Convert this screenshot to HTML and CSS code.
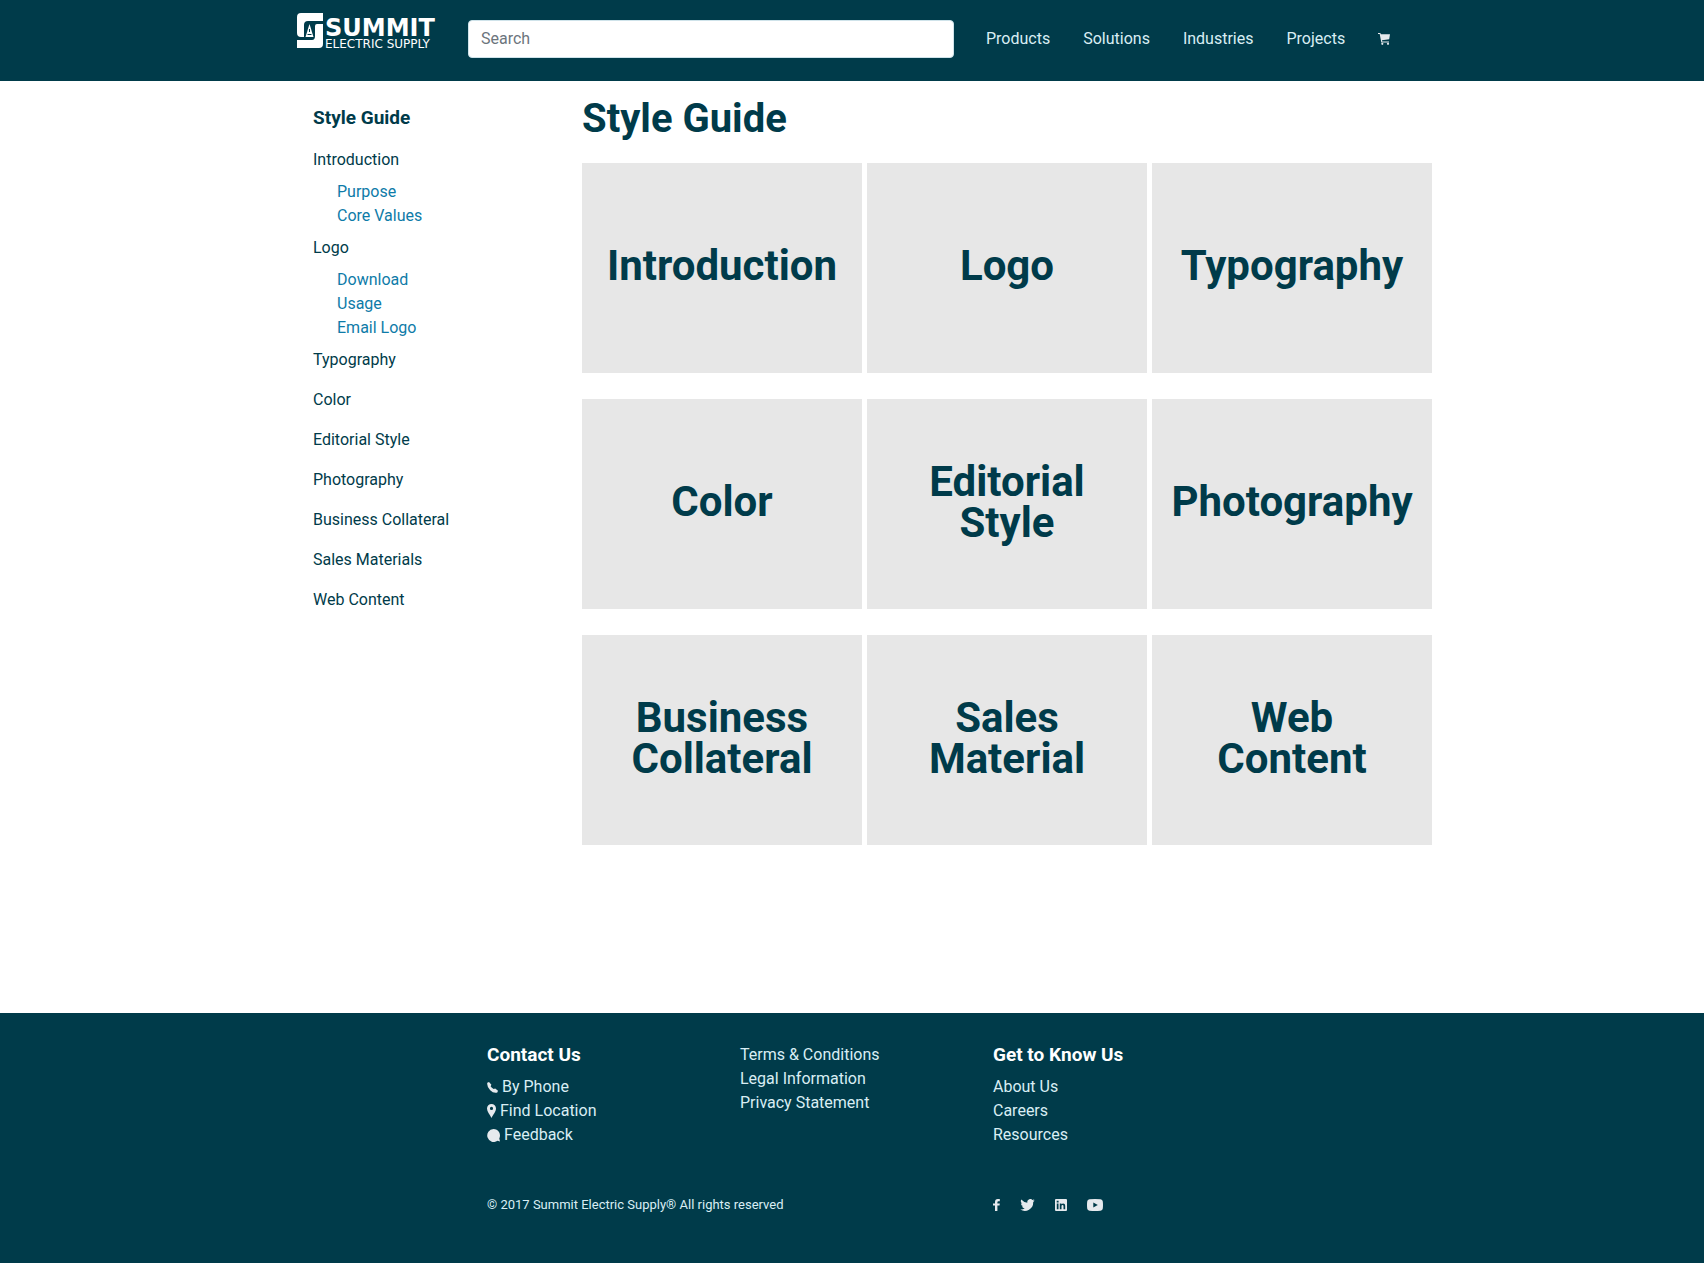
FILE: index.html
```html
<!DOCTYPE html>
<html lang="en">
<head>
<meta charset="utf-8">
<meta name="viewport" content="width=device-width, initial-scale=1">
<title>Style Guide | Summit Electric Supply</title>
<link rel="stylesheet" href="styles.css">
</head>
<body>
<header class="site-header">
  <div class="header-inner">
    <a class="logo" href="#" aria-label="Summit Electric Supply">
      <svg class="logo-mark" viewBox="0 0 26 35" width="26" height="35" aria-hidden="true">
        <path fill="#fff" d="M4 0H26V8H11Q7 8 7 12V24H4Q0 24 0 20V4Q0 0 4 0Z"/>
        <path fill="#fff" d="M20 11H26V31Q26 35 22 35H0V27H15Q18 27 18 23V13Q18 11 20 11Z"/>
        <path fill="#fff" d="M12.500 11L16.500 24H8.500Z"/>
        <path fill="none" stroke="#003b4a" stroke-width="1" d="M12.500 16V19M10.500 21.500H14.500"/>
      </svg>
      <span class="logo-text">
        <span class="logo-name">SUMMIT</span>
        <span class="logo-sub">ELECTRIC SUPPLY</span>
      </span>
    </a>
    <form class="search" role="search">
      <input class="search-input" type="search" placeholder="Search" aria-label="Search">
    </form>
    <nav class="main-nav" aria-label="Main">
      <a href="#">Products</a>
      <a href="#">Solutions</a>
      <a href="#">Industries</a>
      <a href="#">Projects</a>
      <a class="cart" href="#" aria-label="Cart">
        <svg viewBox="0 0 12 12" width="12" height="12" aria-hidden="true"><path fill="currentColor" d="M0 0H2.400L2.800 1.200H12L11.200 6.200L4 7.200L4.200 8.400H11V9.400H3.300L1.700 1H0Z"/><circle fill="currentColor" cx="4.300" cy="10.800" r="1.100"/><circle fill="currentColor" cx="10" cy="10.800" r="1.100"/></svg>
      </a>
    </nav>
  </div>
</header>

<div class="page">
  <aside class="sidebar">
    <h2 class="sidebar-title">Style Guide</h2>
    <ul class="menu">
      <li><a class="menu-link" href="#">Introduction</a>
        <ul class="submenu">
          <li><a href="#">Purpose</a></li>
          <li><a href="#">Core Values</a></li>
        </ul>
      </li>
      <li><a class="menu-link" href="#">Logo</a>
        <ul class="submenu">
          <li><a href="#">Download</a></li>
          <li><a href="#">Usage</a></li>
          <li><a href="#">Email Logo</a></li>
        </ul>
      </li>
      <li><a class="menu-link" href="#">Typography</a></li>
      <li><a class="menu-link" href="#">Color</a></li>
      <li><a class="menu-link" href="#">Editorial Style</a></li>
      <li><a class="menu-link" href="#">Photography</a></li>
      <li><a class="menu-link" href="#">Business Collateral</a></li>
      <li><a class="menu-link" href="#">Sales Materials</a></li>
      <li><a class="menu-link" href="#">Web Content</a></li>
    </ul>
  </aside>
  <main class="content">
    <h1 class="title">Style Guide</h1>
    <div class="tiles">
      <a class="tile" href="#">Introduction</a>
      <a class="tile" href="#">Logo</a>
      <a class="tile" href="#">Typography</a>
      <a class="tile" href="#">Color</a>
      <a class="tile" href="#">Editorial<br>Style</a>
      <a class="tile" href="#">Photography</a>
      <a class="tile" href="#">Business<br>Collateral</a>
      <a class="tile" href="#">Sales<br>Material</a>
      <a class="tile" href="#">Web<br>Content</a>
    </div>
  </main>
</div>

<footer class="site-footer">
  <div class="footer-inner">
    <section>
      <h2 class="footer-title">Contact Us</h2>
      <ul class="footer-list">
        <li><a href="#"><svg viewBox="0 0 11 11" width="11" height="11" aria-hidden="true"><path fill="currentColor" d="M0.300 0.800L2 0L4.400 2.800L3.600 4.200Q4.600 6 6.700 7L8.200 6.400L11 8.700L10.300 10.500Q6.600 11.600 3.200 8.200Q-0.400 4.600 0.300 0.800Z"/></svg>By Phone</a></li>
        <li><a href="#"><svg viewBox="0 0 9 14" width="9" height="14" aria-hidden="true"><path fill="currentColor" fill-rule="evenodd" d="M4.500 0A4.500 4.500 0 0 1 9 4.500C9 7.500 6.500 10 4.500 14C2.500 10 0 7.500 0 4.500A4.500 4.500 0 0 1 4.500 0ZM4.500 2.800A1.600 1.600 0 1 0 4.500 6A1.600 1.600 0 1 0 4.500 2.800Z"/></svg>Find Location</a></li>
        <li><a href="#"><svg viewBox="0 0 13 13" width="13" height="13" aria-hidden="true"><path fill="currentColor" d="M6.500 0A6.500 6.500 0 0 1 12.300 9.400L13 12.500L10.500 11.800A6.500 6.500 0 1 1 6.500 0Z"/></svg>Feedback</a></li>
      </ul>
    </section>
    <ul class="footer-list">
      <li><a href="#">Terms &amp; Conditions</a></li>
      <li><a href="#">Legal Information</a></li>
      <li><a href="#">Privacy Statement</a></li>
    </ul>
    <section>
      <h2 class="footer-title">Get to Know Us</h2>
      <ul class="footer-list">
        <li><a href="#">About Us</a></li>
        <li><a href="#">Careers</a></li>
        <li><a href="#">Resources</a></li>
      </ul>
    </section>
    <p class="copyright">© 2017 Summit Electric Supply® All rights reserved</p>
    <div class="social">
      <a href="#" aria-label="Facebook"><svg viewBox="0 0 7 12" width="7" height="12" aria-hidden="true"><path fill="currentColor" d="M2 12V6.600H0V4.500H2V3Q2 0 4.800 0H6.800V2.200H5.400Q4.400 2.200 4.400 3.200V4.500H6.800L6.500 6.600H4.400V12Z"/></svg></a>
      <a href="#" aria-label="Twitter"><svg viewBox="0 0 24 20" width="15" height="12" aria-hidden="true"><path fill="currentColor" d="M24 2.400a10 10 0 0 1-2.800.8A5 5 0 0 0 23.300.500a10 10 0 0 1-3.100 1.200A4.900 4.900 0 0 0 11.800 6.200 14 14 0 0 1 1.700 1a4.900 4.900 0 0 0 1.500 6.600A5 5 0 0 1 1 7v.1A4.900 4.900 0 0 0 4.900 12a5 5 0 0 1-2.200.1 4.900 4.900 0 0 0 4.600 3.400A10 10 0 0 1 0 17.500 14 14 0 0 0 21.500 5 10 10 0 0 0 24 2.400Z"/></svg></a>
      <a href="#" aria-label="LinkedIn"><svg viewBox="0 0 12 12" width="12" height="12" aria-hidden="true"><path fill="currentColor" fill-rule="evenodd" d="M1 0H11Q12 0 12 1V11Q12 12 11 12H1Q0 12 0 11V1Q0 0 1 0ZM1.800 4.600V10.200H3.500V4.600ZM1.700 1.800V3.600H3.600V1.800ZM4.800 4.600V10.200H6.500V7Q6.500 6 7.500 6T8.500 7V10.200H10.200V6.800Q10.200 4.500 8.200 4.500Q7 4.500 6.500 5.300V4.600Z"/></svg></a>
      <a href="#" aria-label="YouTube"><svg viewBox="0 0 16 12" width="16" height="12" aria-hidden="true"><path fill="currentColor" fill-rule="evenodd" d="M2.500 0.300Q8-.3 13.500.3Q15.600.5 15.800 2.500Q16.200 6 15.800 9.500Q15.600 11.500 13.500 11.700Q8 12.300 2.500 11.700Q.4 11.500.2 9.500Q-.2 6 .2 2.500Q.4.500 2.500.3ZM6.300 3.400V8.600L10.800 6Z"/></svg></a>
    </div>
  </div>
</footer>
</body>
</html>
```
FILE: styles.css
```css
*, *::before, *::after { box-sizing: border-box; }

body {
  margin: 0;
  background: #fff;
  color: #003b4a;
  font-family: Roboto, "Noto Sans", sans-serif;
  font-size: 16px;
  line-height: 24px;
}

a { color: inherit; text-decoration: none; }
a:hover { text-decoration: underline; }
ul { list-style: none; margin: 0; padding: 0; }
h1, h2, p { margin: 0; }
svg { display: block; flex: none; }

/* Header */
.site-header { background: #003b4a; color: #d9eef4; }

.header-inner {
  display: flex;
  align-items: flex-start;
  max-width: 1170px;
  margin: 0 auto;
  padding: 13px 45px 23px 30px;
}

.logo { display: flex; gap: 2px; width: 171px; flex: none; color: #fff; }
.logo:hover { text-decoration: none; }

.logo-text {
  display: flex;
  flex-direction: column;
  padding-top: 5px;
  font-family: "DejaVu Sans", sans-serif;
  white-space: nowrap;
}

.logo-name { font-size: 24px; font-weight: 700; line-height: 20px; }
.logo-sub { font-size: 12px; line-height: 12px; }

.search { flex: 1; max-width: 486px; margin-top: 7px; }

.search-input {
  display: block;
  width: 100%;
  height: 38px;
  padding: 5px 12px 7px;
  border: 1px solid #cfe3ea;
  border-radius: 4px;
  background: #fff;
  color: #495057;
  font: inherit;
}

.search-input::placeholder { color: #6c757d; opacity: 1; }

.main-nav {
  display: flex;
  align-items: center;
  gap: 33px;
  margin: 14px 0 0 32px;
}

/* Page body */
.page {
  display: grid;
  grid-template-columns: 285px minmax(0, 1fr);
  max-width: 1170px;
  margin: 0 auto;
  padding: 0 5px 168px 30px;
}

.sidebar { padding: 25px 16px 0; }
.sidebar-title { margin-bottom: 10px; font-size: 19px; line-height: 24px; }
.menu-link { display: block; padding: 8px 0; }
.submenu { padding-left: 24px; color: #0e7ba8; }

.content { padding-top: 14px; }
.title { margin-bottom: 20px; font-size: 40px; line-height: 48px; }

.tiles {
  display: grid;
  grid-template-columns: repeat(3, minmax(0, 1fr));
  gap: 26px 5px;
}

.tile {
  display: flex;
  align-items: center;
  justify-content: center;
  min-height: 210px;
  padding-bottom: 5px;
  background: #e7e7e7;
  font-size: 42px;
  font-weight: 700;
  line-height: 41px;
  text-align: center;
}

/* Footer */
.site-footer { background: #003b4a; color: #d9eef4; }

.footer-inner {
  display: grid;
  grid-template-columns: repeat(3, 253px);
  row-gap: 46px;
  max-width: 1140px;
  margin: 0 auto;
  padding: 30px 0 46px 205px;
}

.footer-title { margin-bottom: 8px; color: #fff; font-size: 19px; line-height: 24px; }
.footer-list a { display: flex; align-items: center; gap: 4px; }
.footer-list svg, .social svg, .cart svg { color: #e6eaee; }

.copyright { grid-column: span 2; font-size: 13px; }
.social { display: flex; align-items: center; gap: 20px; }
```
